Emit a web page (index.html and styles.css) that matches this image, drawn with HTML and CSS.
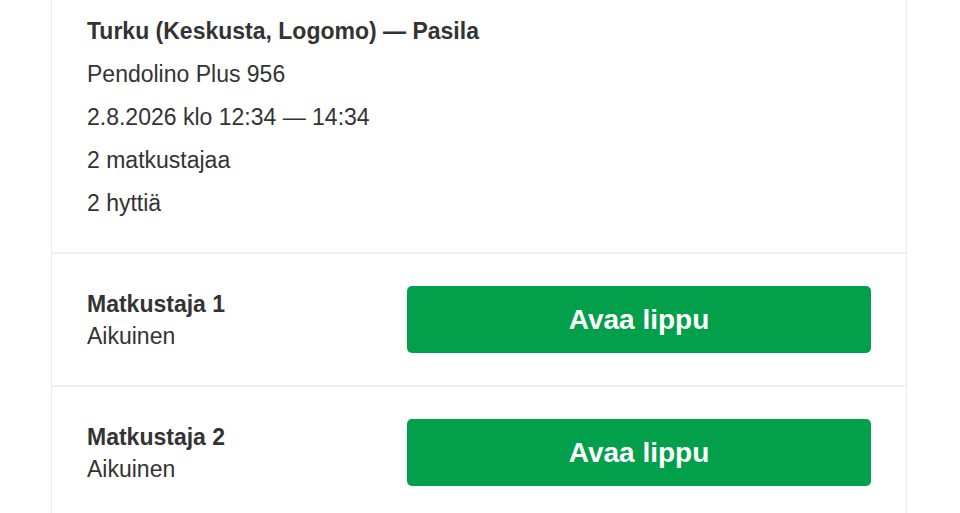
FILE: index.html
```html
<!DOCTYPE html>
<html lang="fi">
<head>
    <meta charset="UTF-8">
    <meta name="viewport" content="width=device-width, initial-scale=1.0">
    <title>Liput</title>
    <link rel="stylesheet" href="styles.css">
</head>
<body>
    <div class="card">
        <div class="trip">
            <div class="trip-title">Turku (Keskusta, Logomo) — Pasila</div>
            <div>Pendolino Plus 956</div>
            <div>2.8.2026 klo 12:34 — 14:34</div>
            <div>2 matkustajaa</div>
            <div>2 hyttiä</div>
        </div>
        <div class="passenger">
            <div class="passenger-info">
                <div class="passenger-name">Matkustaja 1</div>
                <div>Aikuinen</div>
            </div>
            <button class="ticket-button">Avaa lippu</button>
        </div>
        <div class="passenger">
            <div class="passenger-info">
                <div class="passenger-name">Matkustaja 2</div>
                <div>Aikuinen</div>
            </div>
            <button class="ticket-button">Avaa lippu</button>
        </div>
    </div>
</body>
</html>
```

FILE: styles.css
```css
body {
    font-family: "Liberation Sans", Arial, sans-serif;
    margin: 0;
    padding: 0;
    background-color: #fff;
    color: #333;
}
.card {
    width: 854px;
    margin-left: 51px;
    border-left: 1px solid #ebebeb;
    border-right: 1px solid #ebebeb;
    background: #fff;
}
.trip {
    padding: 10px 36px 27px 35px;
    font-size: 23px;
    line-height: 43px;
    border-bottom: 2px solid #f0f0f0;
}
.trip-title {
    font-weight: bold;
}
.passenger {
    display: flex;
    align-items: center;
    padding: 32px 35px 32px 35px;
    border-bottom: 2px solid #f0f0f0;
    font-size: 23px;
    line-height: 32px;
}
.passenger-info {
    flex-grow: 1;
}
.passenger-name {
    font-weight: bold;
}
.ticket-button {
    width: 464px;
    height: 67px;
    border: none;
    border-radius: 5px;
    background-color: #02a04a;
    color: #fff;
    font-family: "Liberation Sans", Arial, sans-serif;
    font-size: 28px;
    font-weight: bold;
    cursor: pointer;
}
```
